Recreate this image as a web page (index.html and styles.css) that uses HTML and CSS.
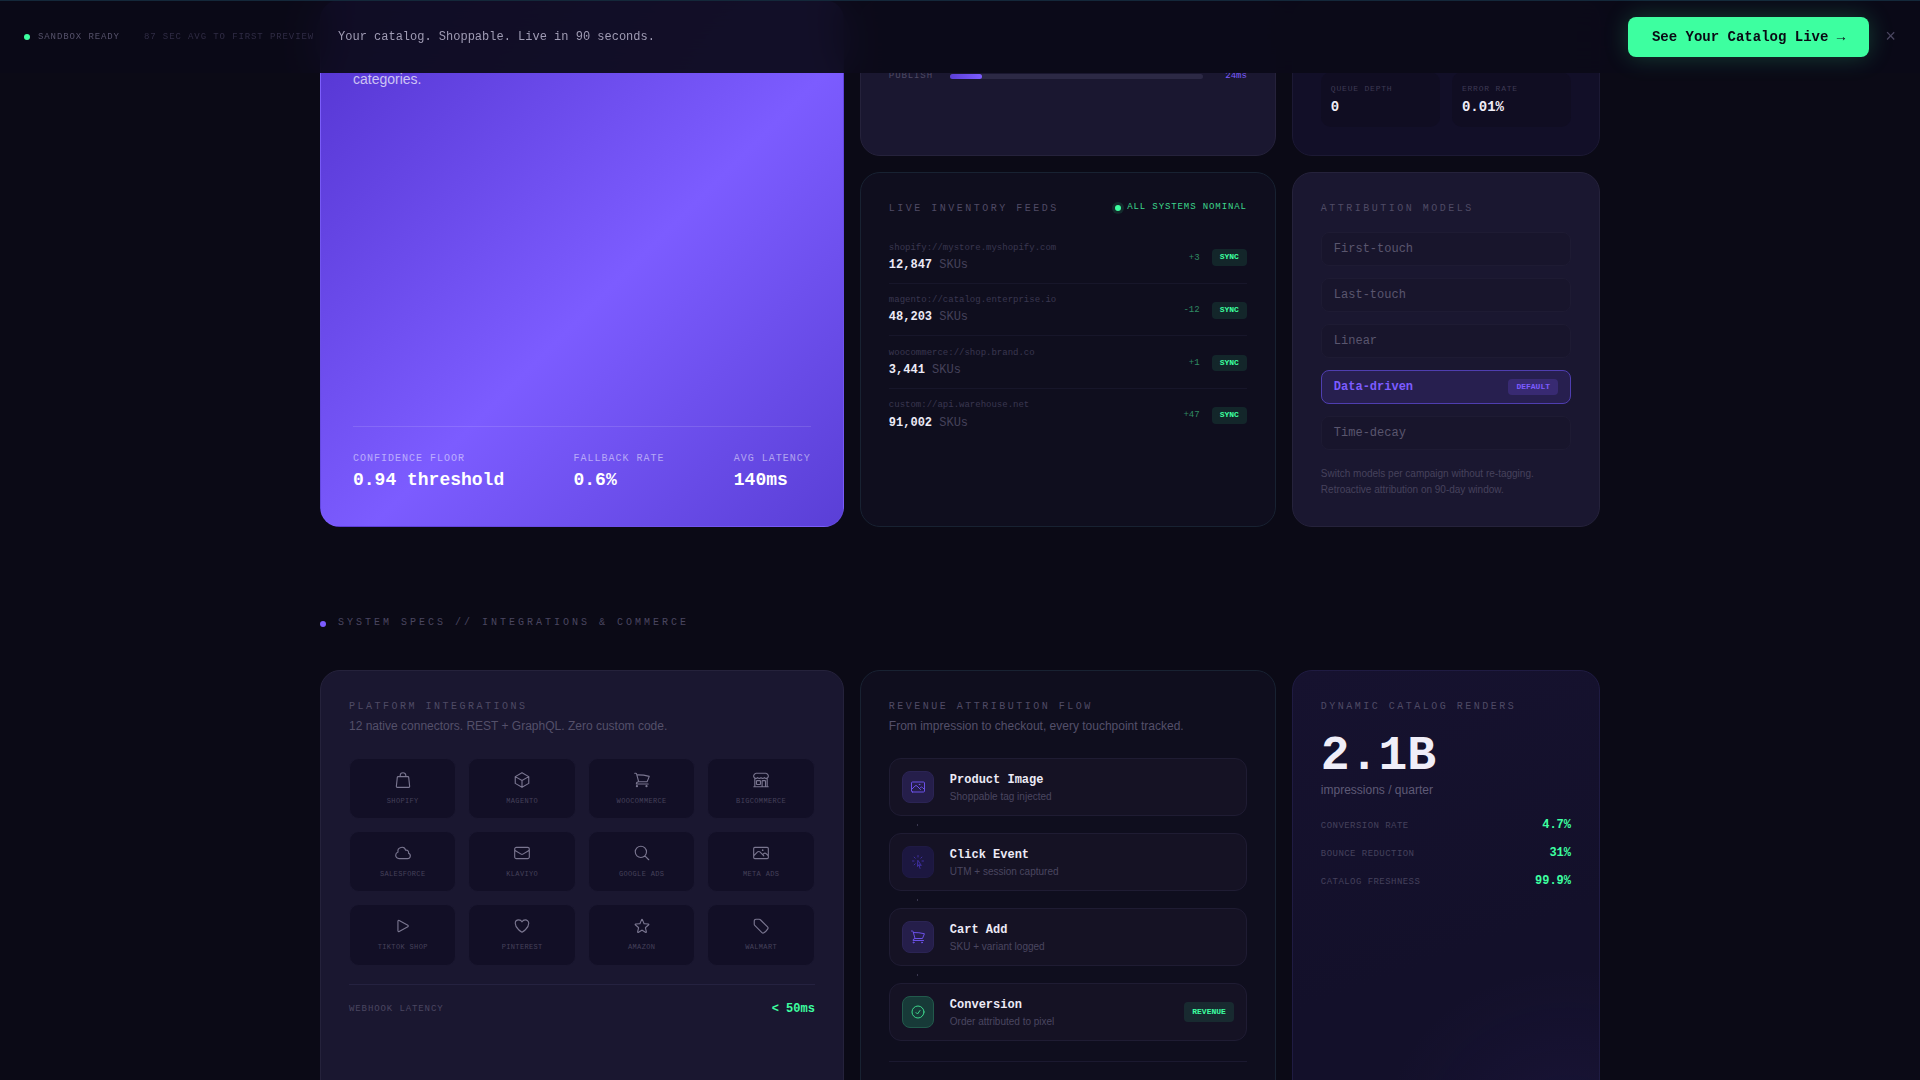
FILE: index.html
```html
<!DOCTYPE html>
<html lang="en">
<head>
<meta charset="utf-8">
<title>Catalog</title>
<link rel="stylesheet" href="styles.css">
</head>
<body>
<svg class="sprite" xmlns="http://www.w3.org/2000/svg">
  <symbol id="i-bag" viewBox="0 0 24 24"><path d="M15.75 7.5V6a3.75 3.75 0 10-7.5 0v1.5m11.356 1.007l1.263 12c.07.665-.45 1.243-1.119 1.243H4.25a1.125 1.125 0 01-1.12-1.243l1.264-12A1.125 1.125 0 015.513 7.5h12.974c.576 0 1.059.435 1.119 1.007z"/></symbol>
  <symbol id="i-cube" viewBox="0 0 24 24"><path d="M21 7.5l-9-5.25L3 7.5m18 0l-9 5.25m9-5.25v9l-9 5.25M3 7.5l9 5.25M3 7.5v9l9 5.25m0-9v9"/></symbol>
  <symbol id="i-cart" viewBox="0 0 24 24"><path d="M2.25 3h1.386c.51 0 .955.343 1.087.835l.383 1.437M7.5 14.25a3 3 0 00-3 3h15.75m-12.75-3h11.218c1.121-2.3 2.1-4.684 2.924-7.138a60.114 60.114 0 00-16.536-1.84M7.5 14.25L5.106 5.272M6 20.25a.75.75 0 11-1.5 0 .75.75 0 011.5 0zm12.75 0a.75.75 0 11-1.5 0 .75.75 0 011.5 0z"/></symbol>
  <symbol id="i-store" viewBox="0 0 24 24"><path d="M13.5 21v-7.5a.75.75 0 01.75-.75h3a.75.75 0 01.75.75V21m-4.5 0H2.36m11.14 0H18m0 0h3.64m-1.39 0V9.349m-16.5 11.65V9.35m0 0a3.001 3.001 0 003.75-.615A2.993 2.993 0 009.75 9.75c.896 0 1.7-.393 2.25-1.016a2.993 2.993 0 002.25 1.016c.896 0 1.7-.393 2.25-1.016a3.001 3.001 0 003.75.614m-16.5 0a3.004 3.004 0 01-.621-4.72L4.318 3.44A1.5 1.5 0 015.378 3h13.243a1.5 1.5 0 011.06.44l1.19 1.189a3 3 0 01-.621 4.72m-13.5 8.65h3.75a.75.75 0 00.75-.75V13.5a.75.75 0 00-.75-.75H6.75a.75.75 0 00-.75.75v3.75c0 .415.336.75.75.75z"/></symbol>
  <symbol id="i-cloud" viewBox="0 0 24 24"><path d="M2.25 15a4.5 4.5 0 004.5 4.5H18a3.75 3.75 0 001.332-7.257 3 3 0 00-3.758-3.848 5.25 5.25 0 00-10.233 2.33A4.502 4.502 0 002.25 15z"/></symbol>
  <symbol id="i-mail" viewBox="0 0 24 24"><path d="M21.75 6.75v10.5a2.25 2.25 0 01-2.25 2.25h-15a2.25 2.25 0 01-2.25-2.25V6.75m19.5 0A2.25 2.25 0 0019.5 4.5h-15a2.25 2.25 0 00-2.25 2.25m19.5 0v.243a2.25 2.25 0 01-1.07 1.916l-7.5 4.615a2.25 2.25 0 01-2.36 0L3.32 8.91a2.25 2.25 0 01-1.07-1.916V6.75"/></symbol>
  <symbol id="i-search" viewBox="0 0 24 24"><path d="M21 21l-5.197-5.197m0 0A7.5 7.5 0 105.196 5.196a7.5 7.5 0 0010.607 10.607z"/></symbol>
  <symbol id="i-photo" viewBox="0 0 24 24"><path d="M2.25 15.75l5.159-5.159a2.25 2.25 0 013.182 0l5.159 5.159m-1.5-1.5l1.409-1.409a2.25 2.25 0 013.182 0l2.909 2.909m-18 3.75h16.5a1.5 1.5 0 001.5-1.5V6a1.5 1.5 0 00-1.5-1.5H3.75A1.5 1.5 0 002.25 6v12a1.5 1.5 0 001.5 1.5zm10.5-11.25h.008v.008h-.008V8.25zm.375 0a.375.375 0 11-.75 0 .375.375 0 01.75 0z"/></symbol>
  <symbol id="i-play" viewBox="0 0 24 24"><path d="M5.25 5.653c0-.856.917-1.398 1.667-.986l11.54 6.348a1.125 1.125 0 010 1.971l-11.54 6.347a1.125 1.125 0 01-1.667-.985V5.653z"/></symbol>
  <symbol id="i-heart" viewBox="0 0 24 24"><path d="M21 8.25c0-2.485-2.099-4.5-4.688-4.5-1.935 0-3.597 1.126-4.312 2.733-.715-1.607-2.377-2.733-4.313-2.733C5.1 3.75 3 5.765 3 8.25c0 7.22 9 12 9 12s9-4.78 9-12z"/></symbol>
  <symbol id="i-star" viewBox="0 0 24 24"><path d="M11.48 3.499a.562.562 0 011.04 0l2.125 5.111a.563.563 0 00.475.345l5.518.442c.499.04.701.663.321.988l-4.204 3.602a.563.563 0 00-.182.557l1.285 5.385a.562.562 0 01-.84.61l-4.725-2.885a.562.562 0 00-.586 0L6.982 20.54a.562.562 0 01-.84-.61l1.285-5.386a.562.562 0 00-.182-.557l-4.204-3.602a.563.563 0 01.321-.988l5.518-.442a.563.563 0 00.475-.345L11.48 3.5z"/></symbol>
  <symbol id="i-tag" viewBox="0 0 24 24"><path d="M9.568 3H5.25A2.25 2.25 0 003 5.25v4.318c0 .597.237 1.17.659 1.591l9.581 9.581c.699.699 1.78.872 2.607.33a18.095 18.095 0 005.223-5.223c.542-.827.369-1.908-.33-2.607L11.16 3.66A2.25 2.25 0 009.568 3z"/></symbol>
  <symbol id="i-check" viewBox="0 0 24 24"><path d="M9 12.75L11.25 15 15 9.75M21 12a9 9 0 11-18 0 9 9 0 0118 0z"/></symbol>
  <symbol id="i-click" viewBox="0 0 24 24"><path d="M15.042 21.672L13.684 16.6m0 0l-2.51 2.225.569-9.47 5.227 7.917-3.286-.672zM12 2.25V4.5m5.834.166l-1.591 1.591M20.25 10.5H18M7.757 14.743l-1.59 1.59M6 10.5H3.75m4.007-4.243l-1.59-1.59"/></symbol>
</svg>

<header class="topbar">
  <span class="dot dot-green"></span>
  <span class="bar-meta bar-status">SANDBOX READY</span>
  <span class="bar-meta bar-dim">87 SEC AVG TO FIRST PREVIEW</span>
  <span class="bar-copy">Your catalog. Shoppable. Live in 90 seconds.</span>
  <a class="cta">See Your Catalog Live →</a>
  <span class="close">×</span>
</header>

<main class="page">
  <section class="grid grid-top">
    <article class="card hero">
      <p class="hero-copy">categories.</p>
      <div class="hero-stats">
        <div><div class="hero-label">CONFIDENCE FLOOR</div><div class="hero-value">0.94 threshold</div></div>
        <div><div class="hero-label">FALLBACK RATE</div><div class="hero-value">0.6%</div></div>
        <div><div class="hero-label">AVG LATENCY</div><div class="hero-value">140ms</div></div>
      </div>
    </article>

    <article class="card card-plain pipeline">
      <div class="pipe-row">
        <span class="pipe-label">PUBLISH</span>
        <span class="pipe-track"><span class="pipe-fill"></span></span>
        <span class="pipe-time">24ms</span>
      </div>
    </article>

    <article class="card card-deep metrics">
      <div class="metric-grid">
        <div class="metric"><div class="metric-label">QUEUE DEPTH</div><div class="metric-value">0</div></div>
        <div class="metric"><div class="metric-label">ERROR RATE</div><div class="metric-value">0.01%</div></div>
      </div>
    </article>

    <article class="card card-dark feeds">
      <div class="feeds-head">
        <h3 class="eyebrow">LIVE INVENTORY FEEDS</h3>
        <div class="nominal"><span class="dot dot-green dot-ring"></span>ALL SYSTEMS NOMINAL</div>
      </div>
      <div class="feed">
        <div class="feed-main"><div class="feed-url">shopify://mystore.myshopify.com</div><div class="feed-count"><b>12,847</b> SKUs</div></div>
        <span class="feed-delta">+3</span><span class="badge badge-green">SYNC</span>
      </div>
      <div class="feed">
        <div class="feed-main"><div class="feed-url">magento://catalog.enterprise.io</div><div class="feed-count"><b>48,203</b> SKUs</div></div>
        <span class="feed-delta">-12</span><span class="badge badge-green">SYNC</span>
      </div>
      <div class="feed">
        <div class="feed-main"><div class="feed-url">woocommerce://shop.brand.co</div><div class="feed-count"><b>3,441</b> SKUs</div></div>
        <span class="feed-delta">+1</span><span class="badge badge-green">SYNC</span>
      </div>
      <div class="feed">
        <div class="feed-main"><div class="feed-url">custom://api.warehouse.net</div><div class="feed-count"><b>91,002</b> SKUs</div></div>
        <span class="feed-delta">+47</span><span class="badge badge-green">SYNC</span>
      </div>
    </article>

    <article class="card card-plain models">
      <h3 class="eyebrow models-title">ATTRIBUTION MODELS</h3>
      <div class="model">First-touch</div>
      <div class="model">Last-touch</div>
      <div class="model">Linear</div>
      <div class="model model-active">Data-driven<span class="badge badge-purple">DEFAULT</span></div>
      <div class="model">Time-decay</div>
      <p class="models-note">Switch models per campaign without re-tagging. Retroactive attribution on 90-day window.</p>
    </article>
  </section>

  <div class="section-label"><span class="dot dot-purple"></span>SYSTEM SPECS // INTEGRATIONS &amp; COMMERCE</div>

  <section class="grid grid-bottom">
    <article class="card card-plain">
      <h3 class="eyebrow">PLATFORM INTEGRATIONS</h3>
      <p class="card-sub">12 native connectors. REST + GraphQL. Zero custom code.</p>
      <div class="connectors">
        <div class="connector"><svg class="icon"><use href="#i-bag"/></svg><span>SHOPIFY</span></div>
        <div class="connector"><svg class="icon"><use href="#i-cube"/></svg><span>MAGENTO</span></div>
        <div class="connector"><svg class="icon"><use href="#i-cart"/></svg><span>WOOCOMMERCE</span></div>
        <div class="connector"><svg class="icon"><use href="#i-store"/></svg><span>BIGCOMMERCE</span></div>
        <div class="connector"><svg class="icon"><use href="#i-cloud"/></svg><span>SALESFORCE</span></div>
        <div class="connector"><svg class="icon"><use href="#i-mail"/></svg><span>KLAVIYO</span></div>
        <div class="connector"><svg class="icon"><use href="#i-search"/></svg><span>GOOGLE ADS</span></div>
        <div class="connector"><svg class="icon"><use href="#i-photo"/></svg><span>META ADS</span></div>
        <div class="connector"><svg class="icon"><use href="#i-play"/></svg><span>TIKTOK SHOP</span></div>
        <div class="connector"><svg class="icon"><use href="#i-heart"/></svg><span>PINTEREST</span></div>
        <div class="connector"><svg class="icon"><use href="#i-star"/></svg><span>AMAZON</span></div>
        <div class="connector"><svg class="icon"><use href="#i-tag"/></svg><span>WALMART</span></div>
      </div>
      <div class="webhook"><span class="webhook-label">WEBHOOK LATENCY</span><span class="webhook-value">&lt; 50ms</span></div>
    </article>

    <article class="card card-dark">
      <h3 class="eyebrow">REVENUE ATTRIBUTION FLOW</h3>
      <p class="card-sub">From impression to checkout, every touchpoint tracked.</p>
      <div class="flow">
        <div class="step">
          <span class="step-icon"><svg class="icon-sm"><use href="#i-photo"/></svg></span>
          <div class="step-text"><div class="step-title">Product Image</div><div class="step-sub">Shoppable tag injected</div></div>
        </div>
        <div class="step-link"></div>
        <div class="step">
          <span class="step-icon step-icon-dim"><svg class="icon-sm"><use href="#i-click"/></svg></span>
          <div class="step-text"><div class="step-title">Click Event</div><div class="step-sub">UTM + session captured</div></div>
        </div>
        <div class="step-link"></div>
        <div class="step">
          <span class="step-icon"><svg class="icon-sm"><use href="#i-cart"/></svg></span>
          <div class="step-text"><div class="step-title">Cart Add</div><div class="step-sub">SKU + variant logged</div></div>
        </div>
        <div class="step-link"></div>
        <div class="step">
          <span class="step-icon step-icon-green"><svg class="icon-sm"><use href="#i-check"/></svg></span>
          <div class="step-text"><div class="step-title">Conversion</div><div class="step-sub">Order attributed to pixel</div></div>
          <span class="badge badge-green badge-tall">REVENUE</span>
        </div>
      </div>
      <div class="flow-rule"></div>
    </article>

    <article class="card card-glow">
      <h3 class="eyebrow">DYNAMIC CATALOG RENDERS</h3>
      <div class="big-number">2.1B</div>
      <div class="big-sub">impressions / quarter</div>
      <div class="kpi"><span class="kpi-label">CONVERSION RATE</span><span class="kpi-value">4.7%</span></div>
      <div class="kpi"><span class="kpi-label">BOUNCE REDUCTION</span><span class="kpi-value">31%</span></div>
      <div class="kpi"><span class="kpi-label">CATALOG FRESHNESS</span><span class="kpi-value">99.9%</span></div>
    </article>
  </section>
</main>
</body>
</html>
```

FILE: styles.css
```css
* { box-sizing: border-box; }
html, body { height: 1080px; overflow: hidden; }
body {
  margin: 0;
  background: #0b0a16;
  color: #f0eef8;
  font-family: "Liberation Sans", Arial, sans-serif;
  line-height: 1.6;
}
h3, p { margin: 0; font-weight: 400; }
.sprite { display: none; }

.dot { display: inline-block; width: 6px; height: 6px; border-radius: 50%; flex: none; }
.dot-green { background: #3dffa0; }
.dot-purple { background: #7c5cff; position: relative; top: 1px; }
.dot-ring { box-shadow: 0 0 0 3px rgba(61, 255, 160, .12); margin-right: 6px; position: relative; top: 1px; }

/* top bar */
.topbar {
  position: fixed;
  top: 0; left: 0; right: 0;
  height: 73px;
  z-index: 5;
  display: flex;
  align-items: center;
  padding: 0 24px;
  background: rgba(11, 10, 24, .93);
  backdrop-filter: blur(20px);
  border-top: 1px solid #14283a;
  font-family: "Liberation Mono", monospace;
}
.bar-meta { font-size: 9px; letter-spacing: .9px; }
.bar-status { color: #55516a; margin-left: 8px; }
.bar-dim { color: #302c45; margin-left: 24px; }
.bar-copy { font-size: 12px; color: #a09cb4; margin-left: 24px; padding-top: 2px; }
.cta {
  margin-left: auto;
  display: block;
  height: 40px;
  line-height: 40px;
  padding: 0 24px;
  border-radius: 8px;
  background: #3dffa0;
  color: #0a0a14;
  font-size: 14px;
  font-weight: 700;
  box-shadow: 0 0 24px rgba(61, 255, 160, .22);
}
.close { margin-left: 16px; font-size: 18px; color: #4a4660; line-height: 1; }

/* page */
.page { width: 1280px; margin: 0 auto; }
.grid { display: grid; grid-template-columns: 1.7fr 1.35fr 1fr; gap: 16px; }
.grid-top { grid-template-rows: 156px 355px; }
.grid-bottom { margin-top: 39px; grid-template-rows: 460px; }

.card { border-radius: 20px; padding: 28px; border: 1px solid #24213a; }
.card-plain { background: #1a1730; border-color: #25223b; }
.card-deep { background: #120f28; border-color: #1c1934; }
.card-dark { background: #0f0e1e; border-color: #182232; }
.card-glow {
  background:
    radial-gradient(ellipse 60% 35% at 90% 100%, rgba(60, 42, 140, .12), transparent 100%),
    linear-gradient(160deg, #16122f, #13102a 60%);
  border-color: #1f1b42;
}
.eyebrow {
  font-family: "Liberation Mono", monospace;
  font-size: 10px;
  letter-spacing: 2.5px;
  color: #4f4b65;
}
.card-sub { font-size: 12px; color: #54506a; margin-top: 2px; line-height: 19px; }

/* hero */
.hero {
  grid-row: 1 / span 2;
  display: flex;
  flex-direction: column;
  padding: 67px 32px 33px;
  border-color: rgba(160, 140, 255, .1);
  background: linear-gradient(135deg, #5333cf 0%, #7c5cff 55%, #5a3fd6 100%);
}
.hero-copy { font-size: 14px; color: rgba(255, 255, 255, .7); }
.hero-stats {
  margin-top: auto;
  display: flex;
  justify-content: space-between;
  padding-top: 24px;
  border-top: 1px solid rgba(255, 255, 255, .12);
  font-family: "Liberation Mono", monospace;
}
.hero-label { font-size: 10px; letter-spacing: 1px; color: rgba(255, 255, 255, .5); }
.hero-value { font-size: 18px; font-weight: 700; color: #fff; line-height: 26.4px; }

/* pipeline */
.pipeline { padding-top: 68px; }
.pipe-row { display: flex; align-items: center; font-family: "Liberation Mono", monospace; font-size: 9px; letter-spacing: .9px; }
.pipe-label { width: 61px; color: #4f4b65; }
.pipe-track { width: 253px; height: 5px; border-radius: 3px; background: #2c2945; display: block; }
.pipe-fill { display: block; width: 32px; height: 100%; border-radius: 3px; background: linear-gradient(90deg, #5b3fd6, #7c5cff); }
.pipe-time { margin-left: auto; color: #7c5cff; letter-spacing: 0; }

/* metrics */
.metrics { display: flex; flex-direction: column; justify-content: flex-end; }
.metric-grid { display: grid; grid-template-columns: 1fr 1fr; gap: 12px; }
.metric { padding: 11px 10px 9px; border-radius: 10px; background: #100d22; font-family: "Liberation Mono", monospace; }
.metric-label { font-size: 8px; letter-spacing: .8px; color: #3e3a54; }
.metric-value { font-size: 14px; font-weight: 700; color: #f0eef8; }

/* feeds */
.feeds-head { display: flex; justify-content: space-between; align-items: center; margin-bottom: 14px; }
.nominal { display: flex; align-items: center; font-family: "Liberation Mono", monospace; font-size: 9px; letter-spacing: .9px; color: #3dd68c; margin-top: -4px; }
.feed { display: flex; align-items: center; padding: 9.5px 0 7.5px; border-bottom: 1px solid #17162a; font-family: "Liberation Mono", monospace; }
.feed:last-child { border-bottom: none; }
.feed-main { flex: 1; }
.feed-url { font-size: 9px; color: #3a3750; }
.feed-count { font-size: 12px; color: #45425a; margin-top: 1px; }
.feed-count b { color: #eceaf6; }
.feed-delta { font-size: 9px; color: #2f8a63; margin-right: 12px; }
.badge { font-family: "Liberation Mono", monospace; font-size: 8px; font-weight: 700; padding: 2px 8px; border-radius: 4px; }
.badge-green { background: rgba(61, 255, 160, .1); color: #3dffa0; }
.badge-purple { background: rgba(124, 92, 255, .2); color: #7c5cff; margin-top: -2px; }
.badge-tall { padding: 4px 8px; }

/* models */
.models-title { margin: 0 0 15px; }
.model {
  display: flex;
  align-items: center;
  justify-content: space-between;
  height: 34px;
  padding: 2px 12px 0;
  margin-bottom: 12px;
  border: 1px solid #1e1b33;
  border-radius: 8px;
  background: #18152c;
  font-family: "Liberation Mono", monospace;
  font-size: 12px;
  color: #5a566e;
}
.model-active { background: #271f4f; border-color: #4f3eb0; color: #7c5cff; font-weight: 700; }
.models-note { font-size: 10px; color: #46425c; margin-top: 16px; padding-right: 30px; }

/* section label */
.section-label {
  display: flex;
  align-items: center;
  gap: 12px;
  margin-top: 88px;
  height: 16px;
  font-family: "Liberation Mono", monospace;
  font-size: 10px;
  letter-spacing: 3px;
  color: #4a4660;
}

/* connectors */
.connectors { display: grid; grid-template-columns: repeat(4, 1fr); gap: 12px; margin-top: 22px; }
.connector {
  display: flex;
  flex-direction: column;
  align-items: center;
  gap: 7px;
  padding: 12px 4px 11px;
  border: 1px solid #1a1730;
  border-radius: 10px;
  background: #120f26;
  font-family: "Liberation Mono", monospace;
  font-size: 7px;
  letter-spacing: .35px;
  color: #45415a;
}
.icon { width: 18px; height: 18px; fill: none; stroke: #7a7690; stroke-width: 1.5; stroke-linecap: round; stroke-linejoin: round; }
.webhook {
  display: flex;
  justify-content: space-between;
  align-items: center;
  margin-top: 18px;
  padding-top: 15px;
  border-top: 1px solid #252240;
  font-family: "Liberation Mono", monospace;
}
.webhook-label { font-size: 9px; letter-spacing: .9px; color: #4a4660; }
.webhook-value { font-size: 12px; font-weight: 700; color: #3dffa0; }

/* flow */
.flow { margin-top: 22px; }
.step {
  display: flex;
  align-items: center;
  gap: 16px;
  height: 58px;
  padding: 0 12px;
  border: 1px solid #1f1c33;
  border-radius: 12px;
  background: #151224;
}
.step-link { height: 17px; display: flex; align-items: center; padding-left: 28px; }
.step-link::before { content: ""; width: 1px; height: 2px; background: #3a3750; }
.step-icon {
  width: 32px; height: 32px;
  display: flex; align-items: center; justify-content: center;
  border-radius: 8px;
  background: #251e4a;
  border: 1px solid #2b2454;
  color: #6a50e6;
  flex: none;
}
.step-icon-dim { background: #1c1740; border-color: #1f1a44; color: #3e2fa0; }
.step-icon-green { background: #173a38; border-color: #225a4c; color: #3dd68c; }
.icon-sm { width: 16px; height: 16px; fill: none; stroke: currentColor; stroke-width: 1.5; stroke-linecap: round; stroke-linejoin: round; }
.step-text { flex: 1; }
.step-title { font-family: "Liberation Mono", monospace; font-size: 12px; font-weight: 700; color: #eceaf6; line-height: 20px; }
.step-sub { font-size: 10px; color: #4a4660; line-height: 14px; }
.flow-rule { height: 1px; background: #1b1930; margin-top: 20px; }

/* glow card */
.big-number { font-family: "Liberation Mono", monospace; font-size: 48px; font-weight: 700; color: #f0eef8; line-height: 58px; margin-top: 11.5px; }
.big-sub { font-size: 12px; color: #5e5a76; margin: -3.3px 0 11.8px; line-height: 19px; }
.kpi { display: flex; justify-content: space-between; align-items: center; height: 28px; font-family: "Liberation Mono", monospace; }
.kpi-label { font-size: 9px; letter-spacing: .45px; color: #45415c; }
.kpi-value { font-size: 12px; font-weight: 700; color: #3dffa0; }
```
